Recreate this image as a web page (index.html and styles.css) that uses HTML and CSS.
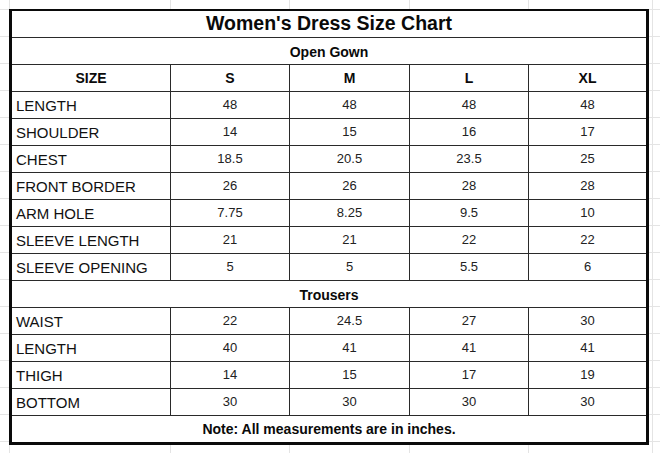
FILE: index.html
```html
<!DOCTYPE html>
<html>
<head>
<meta charset="utf-8">
<link rel="stylesheet" href="styles.css">
</head>
<body>
<table class="chart">
  <colgroup>
    <col class="c-label"><col class="c-s"><col class="c-m"><col class="c-l"><col class="c-xl">
  </colgroup>
  <tr><td class="title" colspan="5">Women's Dress Size Chart</td></tr>
  <tr><td class="section" colspan="5">Open Gown</td></tr>
  <tr class="head"><td>SIZE</td><td>S</td><td>M</td><td>L</td><td class="last">XL</td></tr>
  <tr><td class="label">LENGTH</td><td>48</td><td>48</td><td>48</td><td class="last">48</td></tr>
  <tr><td class="label">SHOULDER</td><td>14</td><td>15</td><td>16</td><td class="last">17</td></tr>
  <tr><td class="label">CHEST</td><td>18.5</td><td>20.5</td><td>23.5</td><td class="last">25</td></tr>
  <tr><td class="label">FRONT BORDER</td><td>26</td><td>26</td><td>28</td><td class="last">28</td></tr>
  <tr><td class="label">ARM HOLE</td><td>7.75</td><td>8.25</td><td>9.5</td><td class="last">10</td></tr>
  <tr><td class="label">SLEEVE LENGTH</td><td>21</td><td>21</td><td>22</td><td class="last">22</td></tr>
  <tr><td class="label">SLEEVE OPENING</td><td>5</td><td>5</td><td>5.5</td><td class="last">6</td></tr>
  <tr><td class="section" colspan="5">Trousers</td></tr>
  <tr><td class="label">WAIST</td><td>22</td><td>24.5</td><td>27</td><td class="last">30</td></tr>
  <tr><td class="label">LENGTH</td><td>40</td><td>41</td><td>41</td><td class="last">41</td></tr>
  <tr><td class="label">THIGH</td><td>14</td><td>15</td><td>17</td><td class="last">19</td></tr>
  <tr><td class="label">BOTTOM</td><td>30</td><td>30</td><td>30</td><td class="last">30</td></tr>
  <tr><td class="note" colspan="5">Note: All measurements are in inches.</td></tr>
</table>
</body>
</html>
```
FILE: styles.css
```css
html {
  background-color: #ffffff;
  background-image:
    linear-gradient(#e4e4e4, #e4e4e4),
    linear-gradient(#e4e4e4, #e4e4e4),
    linear-gradient(#e4e4e4, #e4e4e4),
    linear-gradient(#e4e4e4, #e4e4e4),
    linear-gradient(#e4e4e4, #e4e4e4),
    linear-gradient(#e4e4e4, #e4e4e4),
    repeating-linear-gradient(to bottom, #e4e4e4 0 1px, transparent 1px 27px);
  background-size: 1px 100%, 1px 100%, 1px 100%, 1px 100%, 1px 100%, 1px 100%, 100% 100%;
  background-position: 9px 0, 170px 0, 289px 0, 409px 0, 528px 0, 652px 0, 0 9px;
  background-repeat: no-repeat, no-repeat, no-repeat, no-repeat, no-repeat, no-repeat, repeat;
  height: 100%;
}

body {
  margin: 0;
  padding: 9px;
  font-family: "Liberation Sans", Arial, sans-serif;
  color: #111;
}

.chart {
  table-layout: fixed;
  width: 640px;
  border-collapse: separate;
  border-spacing: 0;
  border-top: 2px solid #0a0a0a;
  border-left: 3px solid #0a0a0a;
  border-right: 3px solid #0a0a0a;
  border-bottom: 3px solid #0a0a0a;
  background: #fff;
}

.c-label { width: 159px; }
.c-s { width: 119px; }
.c-m { width: 120px; }
.c-l { width: 119px; }
.c-xl { width: 117px; }

.chart td {
  box-sizing: border-box;
  height: 27px;
  padding: 0;
  border-right: 1px solid #2a2a2a;
  border-bottom: 1px solid #2a2a2a;
  text-align: center;
  vertical-align: middle;
  font-size: 13px;
  color: #222;
  line-height: 16px;
  overflow: hidden;
}

.chart td.last,
.chart td[colspan] {
  border-right: none;
}

.chart tr:last-child td {
  border-bottom: none;
  height: 26px;
}

.chart td.label {
  text-align: left;
  padding-left: 4px;
  padding-top: 1px;
  font-size: 15px;
  color: #111;
}

.chart td.title {
  font-size: 19.5px;
  font-weight: bold;
  color: #0a0a0a;
  padding-bottom: 3px;
}

.chart td.section,
.chart .head td,
.chart td.note {
  font-size: 14px;
  font-weight: bold;
  color: #0a0a0a;
}

.chart td.section {
  padding-top: 2px;
}
```
